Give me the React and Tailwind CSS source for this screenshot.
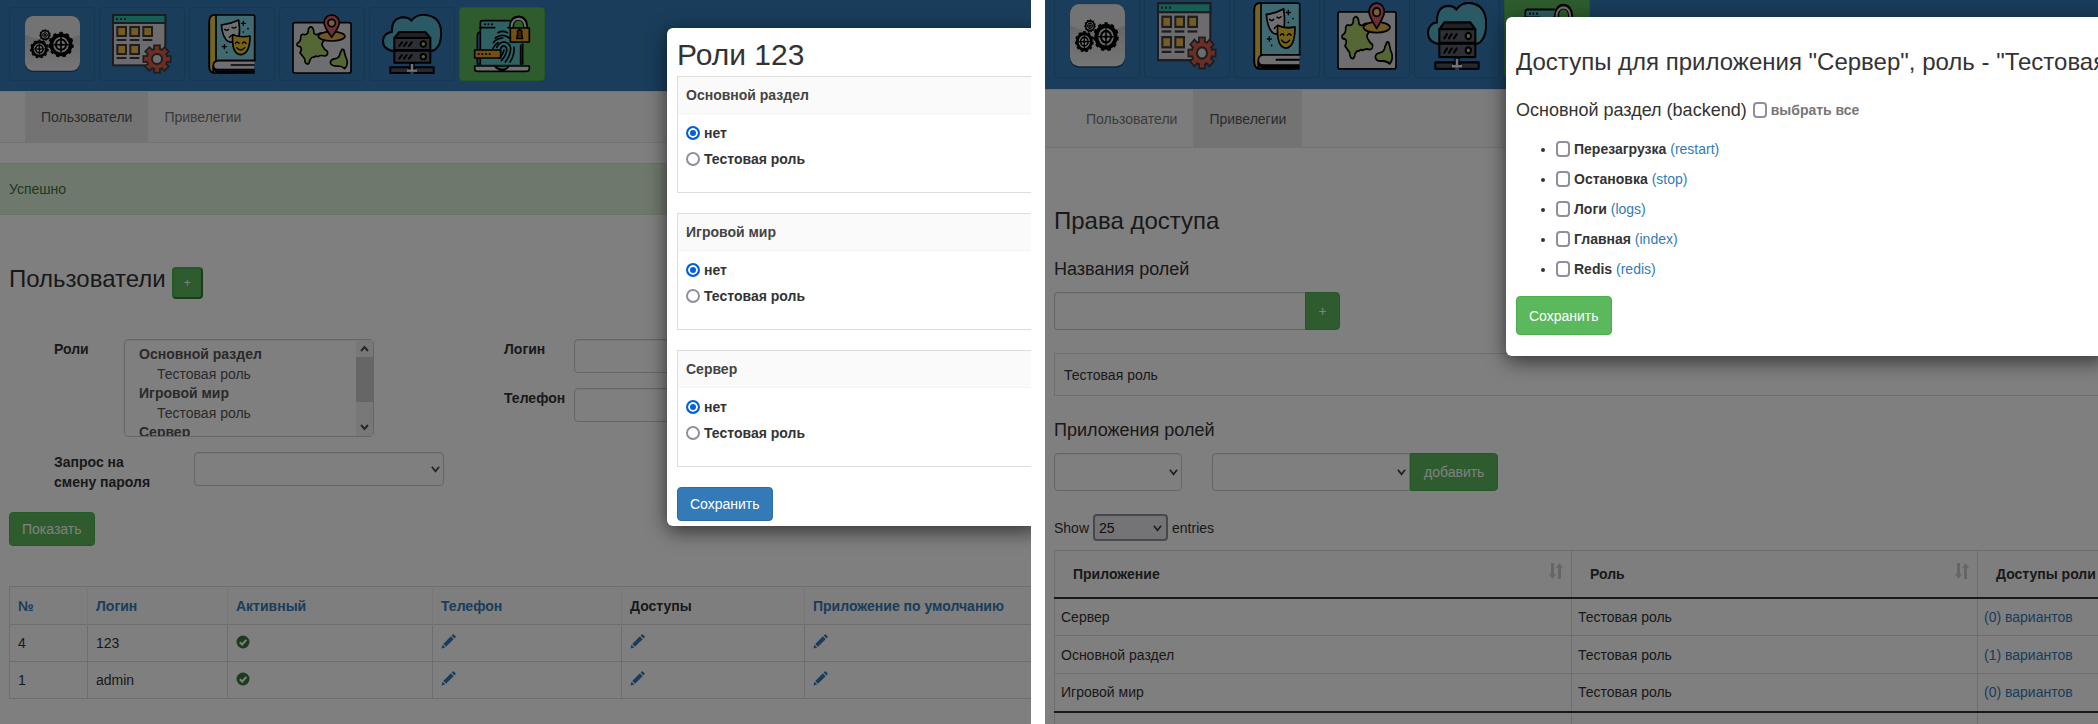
import React from "react";

const FONT = "font-['Liberation_Sans',Arial,sans-serif]";

/* ---------- application icons ---------- */

function GearShape({ cx, cy, r }) {
  const teeth = (2 * Math.PI * r) / 24;
  return (
    <g fill="none" stroke="#000">
      <circle cx={cx} cy={cy} r={r * 0.76} strokeWidth={r * 0.3} />
      <circle cx={cx} cy={cy} r={r * 0.92} strokeWidth={r * 0.18} strokeDasharray={`${teeth} ${teeth}`} />
      <circle cx={cx} cy={cy} r={r * 0.4} strokeWidth={r * 0.16} />
      <path
        d={`M${cx - r * 0.6} ${cy}H${cx + r * 0.6}M${cx} ${cy - r * 0.6}V${cy + r * 0.6}`}
        strokeWidth={r * 0.12}
      />
      <circle cx={cx} cy={cy} r={r * 0.12} fill="#000" />
    </g>
  );
}

function GearsIcon({ id }) {
  return (
    <>
      <defs>
        <linearGradient id={id} x1="0" y1="0" x2="0" y2="1">
          <stop offset="0" stopColor="#bdbdbd" />
          <stop offset="1" stopColor="#ececec" />
        </linearGradient>
      </defs>
      <rect x="9" y="9" width="165" height="165" rx="26" fill="#0f2a40" opacity="0.6" />
      <rect x="9" y="6" width="165" height="164" rx="26" fill={`url(#${id})`} />
      <path d="M9 62V32A26 26 0 0 1 35 6H148A26 26 0 0 1 174 32V62Q92 96 9 62Z" fill="#e6e6e6" />
      <GearShape cx={117} cy={92} r={38} />
      <GearShape cx={52} cy={105} r={28} />
      <GearShape cx={69} cy={63} r={17} />
    </>
  );
}

function CalendarIcon() {
  const cells = [
    [14, 37], [53, 37], [92, 37],
    [14, 91], [53, 91],
  ];
  const teeth = [0, 45, 90, 135, 180, 225, 270, 315];
  return (
    <g stroke="#3a3a3e" strokeWidth="6">
      <rect x="3" y="3" width="157" height="151" fill="#d8d8dc" />
      <rect x="3" y="3" width="157" height="24" fill="#2fbcae" />
      <path d="M12 15h6M24 15h6M36 15h6" />
      {cells.map(([x, y]) => (
        <g key={`${x}-${y}`}>
          <rect x={x + 2} y={y + 2} width="26" height="27" fill="#e8b848" />
          <path d={`M${x} ${y + 41}h29`} />
        </g>
      ))}
      <g fill="#d95c45" strokeWidth="5">
        {teeth.map((a) => (
          <rect key={a} x="126" y="94" width="18" height="20" transform={`rotate(${a} 135 135)`} />
        ))}
        <circle cx="135" cy="135" r="31" />
        {teeth.map((a) => (
          <rect key={a} x="129" y="99" width="12" height="16" stroke="none" transform={`rotate(${a} 135 135)`} />
        ))}
      </g>
      <circle cx="135" cy="135" r="15" fill="#d8d8dc" />
    </g>
  );
}

function BookIcon() {
  return (
    <g stroke="#000" strokeWidth="5" strokeLinejoin="round" strokeLinecap="round">
      <path d="M158 140V8Q158 3 152 3H38Q22 3 22 22V158Q22 177 40 177H156V172H44Q36 172 36 156T48 140Z" fill="#7ed4e4" />
      <path d="M42 3H38Q22 3 22 22V158Q22 174 36 177Q28 160 42 141Z" fill="#e8c84a" />
      <path d="M158 140H48Q34 142 34 154T46 167H156" fill="#dedee2" />
      <path d="M88 153H156M50 177H104M116 177H132" fill="none" />
      <path d="M58 33Q86 30 110 18Q116 60 108 74Q94 90 78 82Q62 72 58 33Z" fill="#dedee2" />
      <path d="M68 46q6 6 12 0M90 40q6 5 12-1M82 70q6-8 14-7" fill="none" strokeWidth="4" />
      <path d="M92 62Q116 72 144 66Q144 118 118 122Q88 122 92 62Z" fill="#ecc52c" />
      <path d="M100 88q6-8 11 0M121 88q6-8 11 0M104 101q12 14 24 0" fill="none" strokeWidth="4" />
      <path d="M124 22v12M118 28h12M67 92v12M61 98h12" fill="none" strokeWidth="4" />
      <path d="M138 44h.1M124 54h.1M74 115h.1" fill="none" />
    </g>
  );
}

function MapIcon() {
  return (
    <g stroke="#000" strokeWidth="5" strokeLinejoin="round" strokeLinecap="round">
      <rect x="3" y="26" width="174" height="151" rx="5" fill="#dcdce0" />
      <path
        d="M49 45Q56 34 62 42Q66 48 66 58Q72 66 82 58Q92 54 98 66Q104 74 94 82Q86 90 94 100Q98 108 106 112Q110 124 98 126Q86 122 78 128Q70 124 66 130Q60 126 54 138Q52 150 46 150Q38 148 38 134Q30 124 24 116Q32 104 24 98Q12 98 16 88Q28 82 26 68Q28 58 38 62Q50 62 49 45Z"
        fill="#a8cf6a"
      />
      <path d="M150 106Q156 104 157 114Q160 128 165 138Q168 154 158 164Q150 156 138 156Q118 158 115 146Q116 136 130 134Q142 132 144 118Z" fill="#a8cf6a" />
      <ellipse cx="119" cy="67" rx="40" ry="14" fill="#e0b048" />
      <path d="M119 70Q96 38 96 26A23 23 0 0 1 142 26Q142 38 119 70Z" fill="#dc5c6c" />
      <circle cx="119" cy="27" r="11" fill="#f0c068" />
    </g>
  );
}

function CloudIcon() {
  const units = [77, 115];
  return (
    <g stroke="#000" strokeWidth="6" strokeLinejoin="round">
      <path d="M40 112Q2 108 3 80Q6 56 30 54Q28 12 64 10Q80 10 88 20Q104 0 132 3Q172 8 177 48Q180 90 160 106Q152 112 136 112Z" fill="#54b4cc" />
      <path d="M37 72L52 54H130L145 72Z" fill="#40424e" />
      {units.map((y) => (
        <g key={y}>
          <rect x="37" y={y - 5} width="108" height="36" fill="#5a5c6c" />
          <path d={`M52 ${y + 19}l8-11M66 ${y + 19}l8-11M81 ${y + 19}l8-11`} strokeLinecap="round" />
          <circle cx="124" cy={y + 13} r="8" fill="#a6d65c" />
        </g>
      ))}
      <rect x="84" y="148" width="12" height="22" fill="#e6e6ea" strokeWidth="4" />
      <path d="M25 160H82V177H25ZM98 160H155V177H98Z" fill="#4a5462" />
      <path d="M75 170H105" stroke="#e6e6ea" strokeWidth="7" />
    </g>
  );
}

function LockIcon() {
  return (
    <g stroke="#000" strokeWidth="5" strokeLinejoin="round" strokeLinecap="round">
      <path d="M24 54Q16 56 16 66V150H152V90" fill="#3f7fd0" />
      <path d="M26 150V24Q26 20 32 20H118V88H146V152H30Z" fill="#5cc0c8" stroke="none" />
      <path d="M25 148V26Q25 20 32 20H112M24 41H68M108 41H112M146 94V150" fill="none" />
      <path d="M39 31h.1M49 31h.1M60 31h.1" fill="none" strokeWidth="6" />
      <path d="M119 40V32Q122 12 141 12Q160 14 161 38" fill="none" strokeWidth="15" />
      <path d="M119 38V32Q124 14 141 14Q158 16 160 38" fill="none" stroke="#e4e4e8" strokeWidth="6" />
      <rect x="115" y="42" width="57" height="42" fill="#e89c24" />
      <path d="M137 58a7 7 0 1 1 12 0l3 16h-18Z" fill="#6b4510" strokeWidth="4" />
      <g fill="none" strokeWidth="5">
        <path d="M78 56Q92 48 106 56M70 72Q92 56 112 72M64 86Q72 74 92 72M74 100Q82 84 98 84Q116 88 116 106Q114 126 100 144" />
        <path d="M86 104Q90 94 98 96Q106 100 104 112Q100 128 88 140M96 108Q92 124 80 132M126 100Q128 124 114 144M62 104Q70 90 78 86" />
      </g>
      <rect x="8" y="108" width="78" height="24" fill="#e89c24" />
      <path d="M20 120h.1M31 120h.1M42 120h.1M53 120h.1" fill="none" strokeWidth="6" />
      <path d="M8 156H68Q74 168 92 168Q106 166 110 156H172V164Q172 172 162 172H18Q8 172 8 164Z" fill="#e4e4e8" />
      <path d="M68 156H110Q104 166 92 166T68 156Z" fill="#5cc0c8" strokeWidth="4" />
    </g>
  );
}

const APPS = [
  ["Настройки", GearsIcon],
  ["Основной раздел", CalendarIcon],
  ["Сценарии", BookIcon],
  ["Игровой мир", MapIcon],
  ["Сервер", CloudIcon],
  ["Доступ", LockIcon],
];

function AppBar({ prefix, barClass, iconClass }) {
  return (
    <header className={`flex shrink-0 items-end gap-1 bg-[#337ab7] px-[9px] ${barClass}`}>
      {APPS.map(([name, Icon], i) => (
        <a
          key={name}
          href="#app"
          aria-label={name}
          className={`flex shrink-0 justify-center rounded border px-3 ${iconClass} ${
            i === APPS.length - 1 ? "border-[#4cae4c] bg-[#5cb85c]" : "border-[#2e6da4]"
          }`}
        >
          <svg viewBox="0 0 180 180" preserveAspectRatio="none" className="h-full w-[60px]">
            <Icon id={`${prefix}-gloss`} />
          </svg>
        </a>
      ))}
    </header>
  );
}

function Tabs({ active, heightClass }) {
  return (
    <nav className={`flex shrink-0 border-y border-[#e7e7e7] bg-[#f8f8f8] pl-[25px] ${heightClass}`}>
      {["Пользователи", "Привелегии"].map((tab) => (
        <a
          key={tab}
          href="#tab"
          className={`flex items-center px-4 ${
            tab === active ? "bg-[#e7e7e7] text-[#555]" : "text-[#777]"
          }`}
        >
          {tab}
        </a>
      ))}
    </nav>
  );
}

/* ---------- form parts ---------- */

const FIELD = "rounded border border-[#ccc] bg-white shadow-[inset_0_1px_1px_rgba(0,0,0,0.075)]";

function Chevron({ className }) {
  return (
    <svg viewBox="0 0 10 10" className={`pointer-events-none absolute top-1/2 size-[9px] -translate-y-1/2 ${className}`} fill="none" stroke="#444" strokeWidth="2">
      <path d="M1 2.5L5 7.5L9 2.5" />
    </svg>
  );
}

function Drop({ id, label, className, wrapClass }) {
  return (
    <div className={`relative ${wrapClass}`}>
      <select id={id} aria-label={label} className={`h-full w-full appearance-none ${FIELD} ${className || ""}`} />
      <Chevron className="right-1" />
    </div>
  );
}

function RolesList() {
  const groups = ["Основной раздел", "Игровой мир", "Сервер"];
  return (
    <div className="relative h-[98px] w-[250px]">
      <select
        id="roles"
        multiple
        size={5}
        className={`h-full w-full overflow-hidden px-3 py-[6px] text-[#555] [scrollbar-width:none] ${FIELD}`}
      >
        {groups.map((g) => (
          <optgroup key={g} label={g} className="font-bold">
            <option className="m-0 h-[21px] p-0 pl-5 pt-[2px] font-normal">Тестовая роль</option>
          </optgroup>
        ))}
      </select>
      <div aria-hidden="true" className="absolute inset-y-px right-px flex w-[17px] flex-col bg-[#f0f0f0]">
        <svg viewBox="0 0 17 17" className="size-[17px]" fill="none" stroke="#505050" strokeWidth="2">
          <path d="M5 11L8.500 7L12 11" />
        </svg>
        <div className="h-[45px] bg-[#cdcdcd]" />
        <div className="grow" />
        <svg viewBox="0 0 17 17" className="size-[17px]" fill="none" stroke="#505050" strokeWidth="2">
          <path d="M5 6L8.500 10L12 6" />
        </svg>
      </div>
    </div>
  );
}

/* ---------- glyphs in tables ---------- */

function OkGlyph() {
  return (
    <svg viewBox="0 0 14 14" className="mb-1 inline size-[14px]" aria-label="да">
      <circle cx="7" cy="7" r="6.500" fill="#3c763d" />
      <path d="M3.800 7.200L6.200 9.500L10.400 4.800" fill="none" stroke="#fff" strokeWidth="2" />
    </svg>
  );
}

function PencilGlyph() {
  return (
    <svg viewBox="0 0 14 14" className="mb-1 inline size-[15px]" fill="#337ab7" aria-hidden="true">
      <path d="M0.400 13.600L1.400 10L4 12.600ZM2.100 9.300L9.200 2.200L11.800 4.800L4.700 11.900ZM9.900 1.500L11 0.400Q11.500 0 12 0.400L13.600 2Q14 2.500 13.600 3L12.500 4.100Z" />
    </svg>
  );
}

function SortGlyph() {
  return (
    <svg viewBox="0 0 14 16" className="absolute right-2 top-3 h-4 w-[14px]" fill="#ccc" aria-hidden="true">
      <path d="M2 0H5V11H7L3.500 16L0 11H2ZM9 16H12V5H14L10.500 0L7 5H9Z" />
    </svg>
  );
}

/* ---------- users screen ---------- */

const USER_COLUMNS = [
  ["№", "w-[78px]"],
  ["Логин", "w-[140px]"],
  ["Активный", "w-[205px]"],
  ["Телефон", "w-[189px]"],
  ["Доступы", "w-[183px]"],
  ["Приложение по умолчанию", ""],
];

function RolePanel({ title, name }) {
  return (
    <section className="mb-5 h-[117px] border border-r-0 border-[#ddd]">
      <h3 className="border-b border-[#f4f4f4] bg-[#fafafa] px-2 py-2 font-bold leading-5 text-[#444]">{title}</h3>
      <div className="flex flex-col gap-[6px] px-2 pt-[9px]">
        {["нет", "Тестовая роль"].map((option, i) => (
          <label key={option} className="flex items-center gap-1 font-bold leading-5">
            <input
              type="radio"
              name={name}
              defaultChecked={i === 0}
              className="size-[14px] appearance-none rounded-full border-2 border-[#8f8f9d] bg-white checked:border-[#0060df] checked:bg-[#0060df] checked:shadow-[inset_0_0_0_2px_#fff]"
            />
            {option}
          </label>
        ))}
      </div>
    </section>
  );
}

function UsersScreen() {
  return (
    <div className="relative flex min-w-0 flex-[1031_1_0%] flex-col overflow-hidden bg-white">
      <AppBar prefix="users" barClass="h-[91px] pb-[10px]" iconClass="h-[74px] py-[6px]" />
      <Tabs active="Пользователи" heightClass="h-[52px]" />
      <p className="mt-5 border-y border-[#d6e9c6] bg-[#dff0d8] px-[9px] py-[15px] leading-5 text-[#3c763d]">Успешно</p>
      <div className="px-[9px]">
        <div className="mt-[50px] flex items-baseline gap-[6px]">
          <h1 className="text-2xl leading-7">Пользователи</h1>
          <button aria-label="Добавить" className="h-8 w-[31px] rounded border-2 border-b-[#357a35] border-l-[#4cae4c] border-r-[#357a35] border-t-[#4cae4c] bg-[#5cb85c] text-xs text-white">
            +
          </button>
        </div>
        <form className="pt-10" onSubmit={(e) => e.preventDefault()}>
          <div className="flex pl-[45px] font-bold leading-5">
            <div className="flex w-[450px] shrink-0 flex-col gap-[15px]">
              <div className="flex">
                <label htmlFor="roles" className="w-[70px]">Роли</label>
                <div className="font-normal"><RolesList /></div>
              </div>
              <div className="flex">
                <label htmlFor="reset" className="w-[140px] pr-8">Запрос на смену пароля</label>
                <Drop id="reset" wrapClass="h-[34px] w-[250px]" />
              </div>
            </div>
            <div className="flex w-[320px] shrink-0 flex-col gap-[15px]">
              <div className="flex">
                <label htmlFor="login" className="w-[70px]">Логин</label>
                <input id="login" className={`h-[34px] w-[250px] ${FIELD}`} />
              </div>
              <div className="flex">
                <label htmlFor="phone" className="w-[70px]">Телефон</label>
                <input id="phone" className={`h-[34px] w-[250px] ${FIELD}`} />
              </div>
            </div>
          </div>
          <button className="mt-5 h-[34px] rounded border border-[#4cae4c] bg-[#5cb85c] px-3 text-white">Показать</button>
        </form>
      </div>
      <div className="mt-10 pl-[9px]">
        <table className="w-full table-fixed border-collapse border border-r-0 border-[#ddd] text-left">
          <thead>
            <tr className="bg-[#fcfcfc]">
              {USER_COLUMNS.map(([title, width]) => (
                <th key={title} className={`h-[38px] border-r border-[#f0f0f0] px-2 last:border-r-0 ${width}`}>
                  {title === "Доступы" ? title : <a href="#sort" className="text-[#337ab7]">{title}</a>}
                </th>
              ))}
            </tr>
          </thead>
          <tbody>
            {[["4", "123"], ["1", "admin"]].map(([id, login]) => (
              <tr key={id}>
                {[id, login].map((v) => (
                  <td key={v} className="h-[37px] border border-[#ddd] px-2">{v}</td>
                ))}
                <td className="border border-[#ddd] px-2"><OkGlyph /></td>
                {["Телефон", "Доступы", "Приложение"].map((v) => (
                  <td key={v} className="border border-[#ddd] px-2 last:border-r-0">
                    <a href="#edit" aria-label={v}><PencilGlyph /></a>
                  </td>
                ))}
              </tr>
            ))}
          </tbody>
        </table>
      </div>

      <div className="absolute inset-0 bg-black/50" />
      <div role="dialog" aria-label="Роли 123" className="absolute -right-2 left-[667px] top-7 rounded-md bg-white pb-[5px] pl-[10px] shadow-[0_5px_20px_rgba(0,0,0,0.6)]">
        <h2 className="pb-[2px] pt-2 text-3xl leading-[38px]">Роли 123</h2>
        <RolePanel title="Основной раздел" name="main" />
        <RolePanel title="Игровой мир" name="world" />
        <RolePanel title="Сервер" name="server" />
        <button className="h-[34px] rounded border border-[#2e6da4] bg-[#337ab7] px-3 text-white">Сохранить</button>
      </div>
    </div>
  );
}

/* ---------- privileges screen ---------- */

const CHECKBOX = "h-4 w-[14px] appearance-none rounded-sm border-2 border-[#8f8f9d] bg-white";

const ACTIONS = [
  ["Перезагрузка", "restart"],
  ["Остановка", "stop"],
  ["Логи", "logs"],
  ["Главная", "index"],
  ["Redis", "redis"],
];

const ROLE_APPS = [
  ["Сервер", "(0) вариантов"],
  ["Основной раздел", "(1) вариантов"],
  ["Игровой мир", "(0) вариантов"],
];

function RightsScreen() {
  return (
    <div className="relative flex min-w-0 flex-[1053_1_0%] flex-col overflow-hidden bg-white">
      <AppBar prefix="rights" barClass="h-[89px] pb-[11px]" iconClass="h-[84px] py-[7px]" />
      <Tabs active="Привелегии" heightClass="h-[59px]" />
      <div className="pl-[9px]">
        <h1 className="mt-[59px] text-2xl leading-7">Права доступа</h1>
        <h2 className="mt-6 text-lg leading-5">Названия ролей</h2>
        <div className="mt-[13px] flex h-[38px]">
          <input aria-label="Название роли" className={`w-[251px] rounded-r-none border-r-0 ${FIELD}`} />
          <button aria-label="Добавить роль" className="w-[35px] rounded-r border border-[#4cae4c] bg-[#5cb85c] text-white">+</button>
        </div>
        <div className="mt-[23px] flex h-[43px] items-center border border-r-0 border-[#ddd] px-[9px]">Тестовая роль</div>
        <h2 className="mt-6 text-lg leading-5">Приложения ролей</h2>
        <div className="mt-[13px] flex h-[38px]">
          <Drop label="Приложение" wrapClass="mr-[30px] w-32" />
          <Drop label="Роль" wrapClass="w-[198px]" className="rounded-r-none" />
          <button className="rounded-r border border-[#4cae4c] bg-[#5cb85c] px-[13px] text-white">добавить</button>
        </div>
        <label className="mt-[23px] flex h-[27px] items-center gap-1">
          Show
          <span className="relative h-full w-[75px]">
            <select className="h-full w-full appearance-none rounded border-2 border-[#8f8f9d] bg-[#e9e9ed] px-1 text-[#222]">
              <option>25</option>
            </select>
            <Chevron className="right-[6px]" />
          </span>
          entries
        </label>
        <table className="mt-[9px] w-full table-fixed border-collapse border border-r-0 border-[#ddd] text-left">
          <thead>
            <tr className="border-b-2 border-[#333] bg-[#fcfcfc] text-[#333]">
              {[["Приложение", "w-[517px]"], ["Роль", "w-[406px]"], ["Доступы роли", ""]].map(([title, width]) => (
                <th key={title} className={`relative h-[47px] whitespace-nowrap border-r border-[#ddd] px-[18px] last:border-r-0 ${width}`}>
                  {title}
                  {width && <SortGlyph />}
                </th>
              ))}
            </tr>
          </thead>
          <tbody>
            {ROLE_APPS.map(([app, variants]) => (
              <tr key={app} className="border-b border-[#ddd] last:border-b-2 last:border-b-[#333]">
                <td className="h-[38px] border-r border-[#ddd] px-[6px]">{app}</td>
                <td className="border-r border-[#ddd] px-[6px]">Тестовая роль</td>
                <td className="px-[6px]"><a href="#variants" className="text-[#337ab7]">{variants}</a></td>
              </tr>
            ))}
          </tbody>
          <tfoot>
            <tr>
              <td className="h-[38px] border-r border-[#ddd]" />
              <td className="border-r border-[#ddd]" />
              <td />
            </tr>
          </tfoot>
        </table>
      </div>

      <div className="absolute inset-0 bg-black/50" />
      <div role="dialog" aria-label="Доступы" className="absolute -right-2 left-[461px] top-[17px] rounded-md bg-white pb-[21px] pl-[10px] pt-[31px] shadow-[0_5px_20px_rgba(0,0,0,0.6)]">
        <h2 className="overflow-hidden whitespace-nowrap text-2xl leading-7">Доступы для приложения "Сервер", роль - "Тестовая роль"</h2>
        <div className="mt-6 flex items-center gap-[6px]">
          <h3 className="text-lg leading-5">Основной раздел (backend)</h3>
          <label className="flex items-center gap-1 font-bold leading-5 text-[#777]">
            <input type="checkbox" className={CHECKBOX} />
            выбрать все
          </label>
        </div>
        <ul className="mb-3 mt-[14px] list-disc pl-10">
          {ACTIONS.map(([title, code]) => (
            <li key={code} className="leading-[30px]">
              <label className="inline-flex items-center gap-1 align-top font-bold">
                <input type="checkbox" className={CHECKBOX} />
                {title}
              </label>{" "}
              <a href="#action" className="text-[#337ab7]">({code})</a>
            </li>
          ))}
        </ul>
        <button className="h-[39px] rounded border border-[#4cae4c] bg-[#5cb85c] px-3 text-white">Сохранить</button>
      </div>
    </div>
  );
}

export default function App() {
  return (
    <main className={`flex h-screen gap-[14px] overflow-hidden bg-white text-sm text-[#333] ${FONT}`}>
      <UsersScreen />
      <RightsScreen />
    </main>
  );
}
